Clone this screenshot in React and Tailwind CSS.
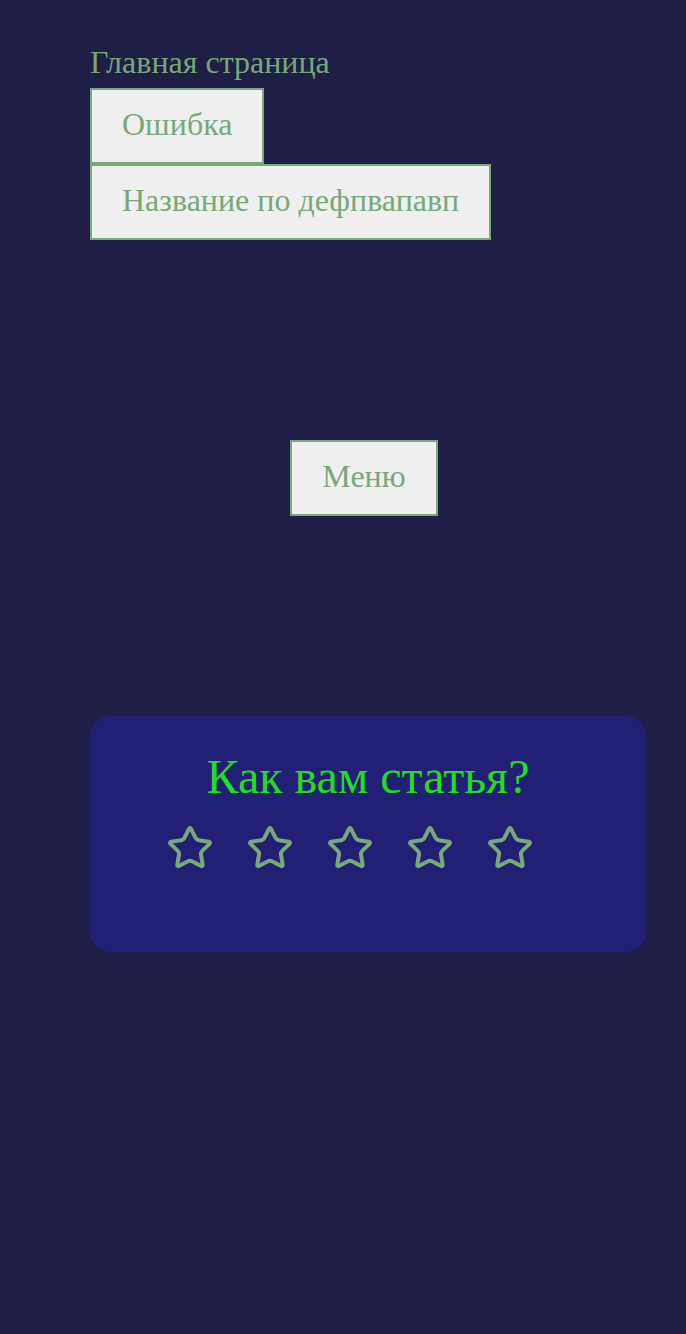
import React from "react";

function Star() {
  return (
    <svg width="48" height="48" viewBox="0 0 24 24" fill="none" stroke="#77a877" strokeWidth="2" strokeLinecap="round" strokeLinejoin="round">
      <path d="M11.525 2.295a.53.53 0 0 1 .95 0l2.31 4.679a2.123 2.123 0 0 0 1.595 1.16l5.166.756a.53.53 0 0 1 .294.904l-3.736 3.638a2.123 2.123 0 0 0-.611 1.878l.882 5.14a.53.53 0 0 1-.771.56l-4.618-2.428a2.122 2.122 0 0 0-1.973 0L6.396 21.01a.53.53 0 0 1-.77-.56l.881-5.139a2.122 2.122 0 0 0-.611-1.879L2.16 9.795a.53.53 0 0 1 .294-.906l5.165-.755a2.122 2.122 0 0 0 1.597-1.16z" />
    </svg>
  );
}

export default function App() {
  const btn = "border-2 border-[#77a877] bg-[#efefef] px-[30px] pt-[16px] pb-[20px] text-[32px] leading-[36px] text-[#77a877]";
  return (
    <div className="min-h-[1334px] w-full bg-[#1f1e46] font-['Liberation_Serif',serif]">
      <div className="ml-[90px] mr-[40px] pt-[44px]">
        <div className="text-[32px] leading-[36px] text-[#77a877]">Главная страница</div>
        <div className="mt-[8px] flex flex-col items-start">
          <button className={btn}>Ошибка</button>
          <button className={btn}>Название по дефпвапавп</button>
        </div>
        <div className="mt-[200px] flex justify-center pr-[8px]">
          <button className={btn}>Меню</button>
        </div>
        <div className="mt-[200px] h-[236px] rounded-[20px] bg-[#212074] pt-[33px]">
          <div className="text-center text-[48px] leading-[56px] text-[#22dd22]">Как вам статья?</div>
          <div className="mt-[19px] flex justify-center gap-8 pr-[36px]">
            <Star />
            <Star />
            <Star />
            <Star />
            <Star />
          </div>
        </div>
      </div>
    </div>
  );
}
